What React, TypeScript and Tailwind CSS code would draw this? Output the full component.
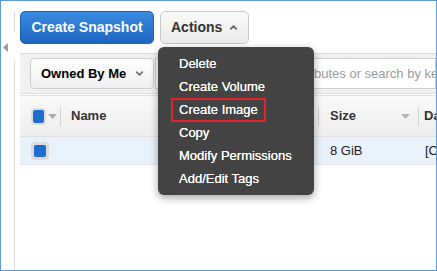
import { ChevronDown, ChevronUp } from 'lucide-react';

const menuItems = [
  'Delete',
  'Create Volume',
  'Create Image',
  'Copy',
  'Modify Permissions',
  'Add/Edit Tags',
];

function Caret({ className = '' }: { className?: string }) {
  return (
    <svg width="9" height="5" viewBox="0 0 9 5" className={className}>
      <polygon points="0,0 9,0 4.5,5" fill="currentColor" />
    </svg>
  );
}

function HeaderDivider() {
  return <div className="w-px h-[19px] shrink-0 bg-[#d2d2d2]" />;
}

export default function App() {
  return (
    <div className="relative w-[437px] h-[271px] overflow-hidden bg-white border border-[#5b9bd5] flex font-['Liberation_Sans',Arial,sans-serif]">
      {/* collapsed side panel */}
      <div className="w-[14px] shrink-0 flex flex-col pt-[10px]">
        <div className="h-[22px] border-r border-[#dcdcdc]" />
        <div className="h-[28px] flex items-center pl-[2px]">
          <svg width="5" height="9" viewBox="0 0 5 9">
            <polygon points="5,0 5,9 0,4.5" fill="#9a9a9a" />
          </svg>
        </div>
        <div className="flex-1 border-r border-[#dcdcdc]" />
      </div>

      <div className="flex-1 min-w-0 overflow-hidden ml-[5px] pt-[10px] flex flex-col">
        {/* top buttons */}
        <div className="flex gap-[6px] h-[33px]">
          <button className="w-[134px] h-full rounded-[5px] border border-[#1d62b5] bg-gradient-to-b from-[#3a8ae0] to-[#1d67c2] text-white text-[14px] font-bold">
            Create Snapshot
          </button>
          <button className="w-[89px] h-full rounded-[5px] border border-[#cacaca] bg-gradient-to-b from-[#f9f9f9] to-[#ebebeb] text-[#333] text-[14px] font-bold flex items-center pl-[10px] gap-[6px]">
            Actions
            <ChevronUp className="w-[11px] h-[11px] text-[#666]" strokeWidth={4} />
          </button>
        </div>

        {/* filter bar */}
        <div className="mt-[9px] h-[41px] bg-[#f1f1f1] border-t border-b border-[#dedede] flex items-center pl-[10px]">
          <button className="w-[124px] shrink-0 h-[31px] rounded-[4px] border border-[#cdcdcd] bg-gradient-to-b from-white to-[#f0f0f0] text-[13px] font-bold text-black flex items-center pl-[10px] gap-[8px]">
            Owned By Me
            <ChevronDown className="w-[11px] h-[11px] text-[#777]" strokeWidth={4} />
          </button>
          <div className="flex-1 min-w-0 h-[31px] ml-[1px] border border-[#cfcfcf] bg-white flex items-center pl-[33px] overflow-hidden">
            <span className="whitespace-nowrap text-[13px] text-[#9b9b9b]">
              Filter by tags and attributes or search by keyword
            </span>
          </div>
        </div>

        {/* table header */}
        <div className="mt-[1px] h-[42px] bg-gradient-to-b from-[#f9f9f9] to-[#eeeeee] border-t border-b border-[#e0e0e0] flex items-center text-[13px] font-bold text-[#333] whitespace-nowrap">
          <div className="w-[40px] shrink-0 flex items-center pl-[11px]">
            <div className="w-[15px] h-[17px] rounded-[4px] bg-[#dedede] p-[2px]">
              <div className="w-full h-full rounded-[2px] bg-[#1f6fd0]" />
            </div>
            <Caret className="ml-[2px] text-[#aaa]" />
          </div>
          <HeaderDivider />
          <div className="w-[257px] shrink-0 pl-[10px]">Name</div>
          <HeaderDivider />
          <div className="w-[99px] shrink-0 pl-[11px] pr-[8px] flex items-center justify-between">
            Size
            <Caret className="text-[#b5b5b5]" />
          </div>
          <HeaderDivider />
          <div className="pl-[5px]">Date</div>
        </div>

        {/* selected row */}
        <div className="h-[28px] bg-[#e9f1fb] border-b border-[#e3e7ee] flex items-center text-[13px] text-[#222] whitespace-nowrap">
          <div className="w-[40px] shrink-0 pl-[11px]">
            <div className="w-[18px] h-[18px] rounded-[4px] bg-[#dcdcdc] p-[3px]">
              <div className="w-full h-full rounded-[2px] bg-[#1f6fd0]" />
            </div>
          </div>
          <div className="w-[270px] shrink-0" />
          <div className="w-[95px] shrink-0">8 GiB</div>
          <div>[Copied</div>
        </div>
      </div>

      {/* actions menu */}
      <div className="absolute left-[157px] top-[46px] w-[156px] h-[148px] rounded-[6px] bg-[#434343] py-[5px] shadow-[0_3px_8px_rgba(0,0,0,0.35)]">
        {menuItems.map((item) => (
          <div key={item} className="h-[23px] flex items-center pl-[21px] text-[13px] text-white whitespace-nowrap [text-shadow:0_0_0.4px_#fff]">
            {item === 'Create Image' ? (
              <span className="h-[24px] -ml-[8px] px-[6px] border-2 border-[#e3222b] flex items-center">
                {item}
              </span>
            ) : (
              item
            )}
          </div>
        ))}
      </div>
    </div>
  );
}
